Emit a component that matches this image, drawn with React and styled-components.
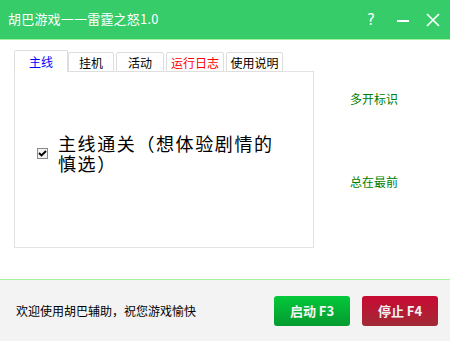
import React, { useState } from 'react';
import styled, { createGlobalStyle } from 'styled-components';

const GlobalStyle = createGlobalStyle`
  html, body {
    margin: 0;
    padding: 0;
    background: #ffffff;
  }
  body {
    font-family: "Noto Sans CJK SC", "Liberation Sans", sans-serif;
  }
`;

const tabs = [
  { label: '主线', width: 54, color: '#0000ff' },
  { label: '挂机', width: 46 },
  { label: '活动', width: 48 },
  { label: '运行日志', width: 58, color: '#ff0000' },
  { label: '使用说明', width: 57 },
];

function App() {
  const [active, setActive] = useState(0);
  const [checked, setChecked] = useState(true);

  return (
    <>
      <GlobalStyle />
      <Window>
        <TitleBar>
          <Title>胡巴游戏一一雷霆之怒1.0</Title>
          <TitleButtons>
            <TitleButton>?</TitleButton>
            <TitleButton>
              <svg width="14" height="14" viewBox="0 0 14 14">
                <rect x="1" y="7" width="12" height="2" fill="#fff" />
              </svg>
            </TitleButton>
            <TitleButton>
              <svg width="14" height="14" viewBox="0 0 14 14">
                <path d="M1 1 L13 13 M13 1 L1 13" stroke="#fff" strokeWidth="1.6" />
              </svg>
            </TitleButton>
          </TitleButtons>
        </TitleBar>

        <Body>
          <TabArea>
            <TabStrip>
              {tabs.map((t, i) => (
                <Tab
                  key={t.label}
                  $width={t.width}
                  $active={i === active}
                  $color={t.color}
                  onClick={() => setActive(i)}
                >
                  {t.label}
                </Tab>
              ))}
            </TabStrip>
            <Panel>
              <CheckRow onClick={() => setChecked(!checked)}>
                <CheckBox>
                  {checked && (
                    <svg width="9" height="9" viewBox="0 0 9 9">
                      <path d="M1 4 L3.5 6.5 L8 2" stroke="#000" strokeWidth="1.8" fill="none" />
                    </svg>
                  )}
                </CheckBox>
                <CheckLabel>主线通关（想体验剧情的慎选）</CheckLabel>
              </CheckRow>
            </Panel>
          </TabArea>

          <SideColumn>
            <SideLink>多开标识</SideLink>
            <SideLink>总在最前</SideLink>
          </SideColumn>
        </Body>

        <Footer>
          <FooterText>欢迎使用胡巴辅助，祝您游戏愉快</FooterText>
          <Buttons>
            <ActionButton $variant="start">启动 F3</ActionButton>
            <ActionButton $variant="stop">停止 F4</ActionButton>
          </Buttons>
        </Footer>
      </Window>
    </>
  );
}

export default App;

const Window = styled.div`
  width: 450px;
  height: 341px;
  display: flex;
  flex-direction: column;
  background: #ffffff;
  overflow: hidden;
`;

const TitleBar = styled.div`
  height: 39px;
  flex: none;
  background: #35cc69;
  border-bottom: 1px solid #a6f0a0;
  display: flex;
  align-items: center;
  justify-content: space-between;
  padding: 0 8px;
`;

const Title = styled.div`
  color: #ffffff;
  font-size: 13px;
  letter-spacing: 0.2px;
  margin-top: -2px;
`;

const TitleButtons = styled.div`
  display: flex;
  align-items: center;
  gap: 14px;
  margin-right: 1px;
`;

const TitleButton = styled.div`
  width: 16px;
  height: 16px;
  display: flex;
  align-items: center;
  justify-content: center;
  color: #ffffff;
  font-size: 15px;
  font-family: "DejaVu Sans", sans-serif;
  &:first-child {
    margin-right: 2px;
  }
`;

const Body = styled.div`
  flex: 1;
  display: flex;
  padding: 10px 0 0 14px;
`;

const TabArea = styled.div`
  width: 300px;
  display: flex;
  flex-direction: column;
`;

const TabStrip = styled.div`
  display: flex;
  align-items: flex-end;
  height: 22px;
`;

const Tab = styled.div`
  width: ${(p) => p.$width}px;
  height: ${(p) => (p.$active ? 22 : 20)}px;
  box-sizing: border-box;
  border: 1px solid #dedede;
  border-bottom: ${(p) => (p.$active ? 'none' : '1px solid #dedede')};
  border-radius: 2px 2px 0 0;
  background: #ffffff;
  margin-right: ${(p) => (p.$active ? 0 : 2)}px;
  display: flex;
  align-items: center;
  justify-content: center;
  font-size: 12px;
  color: ${(p) => p.$color || '#000000'};
  cursor: default;
  position: relative;
  z-index: ${(p) => (p.$active ? 1 : 0)};
  padding-top: ${(p) => (p.$active ? 0 : 1)}px;
`;

const Panel = styled.div`
  height: 177px;
  box-sizing: border-box;
  border: 1px solid #e3e3e3;
  margin-top: -1px;
  padding: 61px 0 0 22px;
`;

const CheckRow = styled.div`
  display: flex;
  align-items: center;
  cursor: default;
`;

const CheckBox = styled.div`
  width: 11px;
  height: 11px;
  box-sizing: border-box;
  border: 1px solid #8a8a8a;
  background: #f4f4f4;
  display: flex;
  align-items: center;
  justify-content: center;
  flex: none;
`;

const CheckLabel = styled.div`
  font-size: 18px;
  line-height: 20px;
  letter-spacing: 1.6px;
  width: 222px;
  margin-left: 10px;
  color: #000000;
`;

const SideColumn = styled.div`
  display: flex;
  flex-direction: column;
  padding: 42px 0 0 36px;
  gap: 70px;
`;

const SideLink = styled.div`
  font-size: 12px;
  color: #008000;
  line-height: 13px;
`;

const Footer = styled.div`
  height: 61px;
  flex: none;
  background: #f3f3f3;
  border-top: 1px solid #a6f0a0;
  display: flex;
  align-items: center;
  justify-content: space-between;
  padding: 0 12px 0 16px;
`;

const FooterText = styled.div`
  font-size: 12px;
  color: #000000;
`;

const Buttons = styled.div`
  display: flex;
  gap: 12px;
`;

const ActionButton = styled.div`
  width: 76px;
  height: 30px;
  border-radius: 3px;
  display: flex;
  align-items: center;
  justify-content: center;
  color: #f4f4f4;
  font-size: 13px;
  font-weight: bold;
  background: ${(p) =>
    p.$variant === 'start'
      ? 'linear-gradient(#04c83a, #039a2f)'
      : 'linear-gradient(#c90a33, #a12a36)'};
`;
